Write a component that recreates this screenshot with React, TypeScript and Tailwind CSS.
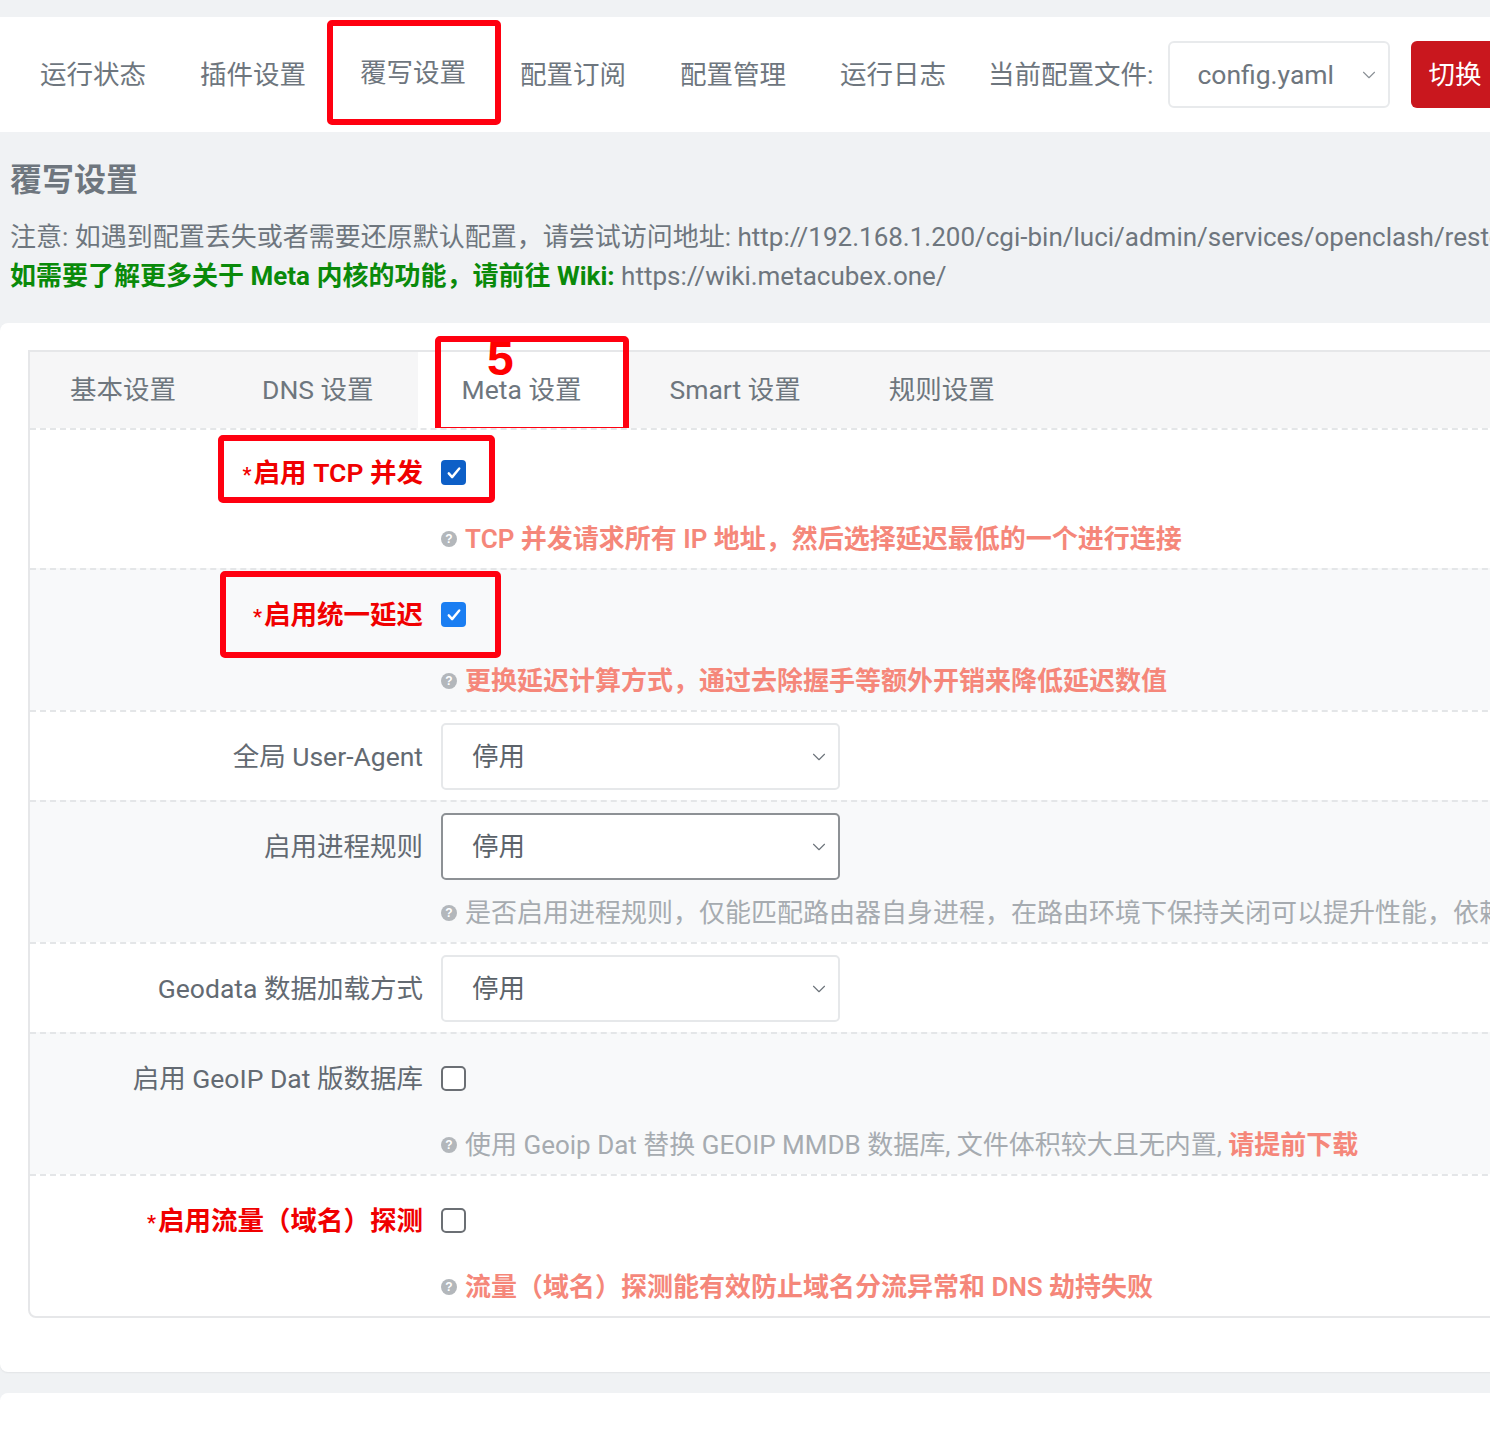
import React from "react";
import { ChevronDown } from "lucide-react";

function Help() {
  return (
    <span className="inline-flex items-center justify-center w-[16px] h-[16px] rounded-full bg-[#b3b7bb] text-white text-[12px] font-bold leading-none mr-[8px] shrink-0 font-['Liberation_Sans',sans-serif]">
      ?
    </span>
  );
}

function Checkbox({ checked, dark }: { checked: boolean; dark?: boolean }) {
  if (checked) {
    return (
      <span
        className={
          dark
            ? "w-[25px] h-[25px] rounded-[4px] bg-[#0d5fc7] flex items-center justify-center"
            : "w-[25px] h-[25px] rounded-[4px] bg-[#1a7ef2] flex items-center justify-center"
        }
      >
        <svg width="18" height="18" viewBox="0 0 24 24" fill="none">
          <path d="M5 12.5l4.5 5L19 6" stroke="white" strokeWidth="3.2" strokeLinecap="round" strokeLinejoin="round" />
        </svg>
      </span>
    );
  }
  return <span className="w-[25px] h-[25px] rounded-[5px] border-2 border-[#6b6f74] bg-white block" />;
}

function Select({ dark }: { dark?: boolean }) {
  return (
    <div
      className={
        dark
          ? "w-[399px] h-[67px] shrink-0 rounded-[5px] border-2 border-[#8d9195] bg-white flex items-center justify-between pl-[29px] pr-[8px]"
          : "w-[399px] h-[67px] shrink-0 rounded-[5px] border-2 border-[#e6e8ea] bg-white flex items-center justify-between pl-[29px] pr-[8px]"
      }
    >
      <span className="text-[26.5px] text-[#5c636a]">停用</span>
      <ChevronDown size={22} strokeWidth={1.2} className="text-[#6c737a]" />
    </div>
  );
}

function Row({
  bg,
  label,
  red,
  control,
  desc,
  overlay,
  short,
  tight,
}: {
  bg: string;
  label: React.ReactNode;
  red?: boolean;
  control: React.ReactNode;
  desc?: React.ReactNode;
  overlay?: React.ReactNode;
  short?: boolean;
  tight?: boolean;
}) {
  return (
    <div
      className={
        "relative flex border-t-2 border-dashed border-[#e4e6e8] " +
        bg +
        (tight ? " pt-[9px]" : " pt-[11px]") +
        (short ? " pb-[10px]" : " pb-[11px]")
      }
    >
      <div
        className={
          red
            ? "w-[393px] shrink-0 h-[67px] flex items-center justify-end text-[26.5px] font-semibold text-[#f00000] whitespace-nowrap"
            : "w-[393px] shrink-0 h-[67px] flex items-center justify-end text-[26.5px] text-[#636a72] whitespace-nowrap"
        }
      >
        {label}
      </div>
      <div className="ml-[18px] flex-1 min-w-0">
        <div className="h-[67px] flex items-center">{control}</div>
        {desc && (
          <div className="mt-[15px] h-[36px] flex items-center text-[26px] whitespace-nowrap">
            <Help />
            <span>{desc}</span>
          </div>
        )}
      </div>
      {overlay}
    </div>
  );
}

export default function App() {
  const navItem = "text-[26.5px] text-[#6e767e] whitespace-nowrap shrink-0";
  const tab = "flex items-center px-[44px] text-[26.5px] text-[#6e767e]";
  return (
    <div className="w-[1490px] h-[1434px] overflow-hidden bg-[#f0f2f4] font-['Roboto','Noto_Sans_CJK_SC',sans-serif]">
      {/* top nav */}
      <div className="mt-[17px] h-[115px] bg-white relative flex items-center pl-[40px]">
        <span className={navItem + " w-[160px]"}>运行状态</span>
        <span className={navItem + " w-[160px]"}>插件设置</span>
        <span className={navItem + " w-[160px] -mt-[4px]"}>覆写设置</span>
        <span className={navItem + " w-[160px]"}>配置订阅</span>
        <span className={navItem + " w-[160px]"}>配置管理</span>
        <span className={navItem}>运行日志</span>
        <span className={navItem + " ml-[42px]"}>当前配置文件:</span>
        <div className="ml-[15px] w-[222px] h-[67px] shrink-0 rounded-[6px] border-2 border-[#e8eaec] flex items-center justify-between pl-[27px] pr-[8px]">
          <span className="text-[26.5px] text-[#6e767e]">config.yaml</span>
          <ChevronDown size={22} strokeWidth={1.2} className="text-[#8a9096]" />
        </div>
        <div className="ml-[21px] h-[67px] w-[120px] shrink-0 rounded-l-[6px] bg-[#c9171e] flex items-center pl-[17px] text-[26.5px] text-white">
          切换
        </div>
        <div className="absolute left-[327px] top-[3px] w-[174px] h-[105px] border-[6px] border-[#ff0010] rounded-[5px]" />
      </div>

      {/* header */}
      <div className="pt-[24px] px-[10px] pb-[27px] whitespace-nowrap">
        <div className="h-[48px] leading-[48px] text-[32px] font-bold text-[#6e767e]">覆写设置</div>
        <div className="mt-[14px] leading-[39px] text-[26px] text-[#6e767e]">
          注意: 如遇到配置丢失或者需要还原默认配置，请尝试访问地址: http://192.168.1.200/cgi-bin/luci/admin/services/openclash/restore
        </div>
        <div className="leading-[39px] text-[26px]">
          <span className="font-bold text-[#0a8a0a]">如需要了解更多关于 Meta 内核的功能，请前往 Wiki:</span>
          <span className="text-[#6e767e]"> https://wiki.metacubex.one/</span>
        </div>
      </div>

      {/* card */}
      <div className="bg-white rounded-[8px] w-[1560px] pt-[27px] pl-[28px] pb-[54px] shadow-[0_1px_2px_rgba(0,0,0,0.06)]">
        <div className="border-2 border-[#e6e7e9] rounded-bl-[8px]">
          {/* tabs */}
          <div className="relative h-[76px] bg-[#f6f6f7] flex items-stretch">
            <div className="flex items-center pl-[40px] pr-[43px] text-[26.5px] text-[#6e767e]">基本设置</div>
            <div className="flex items-center pl-[43px] pr-[44px] text-[26.5px] text-[#6e767e]">DNS 设置</div>
            <div className={tab + " bg-white"}>Meta 设置</div>
            <div className={tab}>Smart 设置</div>
            <div className={tab}>规则设置</div>
            <div className="absolute left-[405px] top-[-16px] w-[194px] h-[97px] border-[6px] border-[#ff0010] rounded-[5px]" />
            <div className="absolute left-[457px] top-[-17px] text-[48px] leading-[48px] font-bold text-[#ff0000] font-['Liberation_Sans',sans-serif]">
              5
            </div>
          </div>

          <Row
            bg="bg-white"
            red
            tight
            label={
              <>
                <span className="text-[20px] mr-[2px] relative top-[2px]">*</span>启用 TCP 并发
              </>
            }
            control={<Checkbox checked dark />}
            desc={<span className="font-semibold text-[#f5877a]">TCP 并发请求所有 IP 地址，然后选择延迟最低的一个进行连接</span>}
            overlay={<div className="absolute left-[188px] top-[5px] w-[277px] h-[68px] border-[6px] border-[#ff0010] rounded-[5px]" />}
          />
          <Row
            bg="bg-[#f8f9fa]"
            red
            label={
              <>
                <span className="text-[20px] mr-[2px] relative top-[2px]">*</span>启用统一延迟
              </>
            }
            control={<Checkbox checked />}
            desc={<span className="font-semibold text-[#f5877a]">更换延迟计算方式，通过去除握手等额外开销来降低延迟数值</span>}
            overlay={<div className="absolute left-[190px] top-[1px] w-[281px] h-[87px] border-[6px] border-[#ff0010] rounded-[5px]" />}
          />
          <Row bg="bg-white" label="全局 User-Agent" control={<Select />} short />
          <Row
            bg="bg-[#f8f9fa]"
            label="启用进程规则"
            control={<Select dark />}
            desc={
              <span className="text-[#a6abb0]">
                是否启用进程规则，仅能匹配路由器自身进程，在路由环境下保持关闭可以提升性能，依赖内核进程识别功能
              </span>
            }
          />
          <Row bg="bg-white" label="Geodata 数据加载方式" control={<Select />} short />
          <Row
            bg="bg-[#f8f9fa]"
            label="启用 GeoIP Dat 版数据库"
            control={<Checkbox checked={false} />}
            desc={
              <>
                <span className="text-[#a6abb0]">使用 Geoip Dat 替换 GEOIP MMDB 数据库, 文件体积较大且无内置, </span>
                <span className="font-semibold text-[#f5877a]">请提前下载</span>
              </>
            }
          />
          <Row
            bg="bg-white rounded-bl-[8px]"
            red
            label={
              <>
                <span className="text-[20px] mr-[2px] relative top-[2px]">*</span>启用流量（域名）探测
              </>
            }
            control={<Checkbox checked={false} />}
            desc={<span className="font-semibold text-[#f5877a]">流量（域名）探测能有效防止域名分流异常和 DNS 劫持失败</span>}
          />
        </div>
      </div>

      <div className="mt-[21px] bg-white rounded-[8px] w-[1560px] h-[80px]" />
    </div>
  );
}
